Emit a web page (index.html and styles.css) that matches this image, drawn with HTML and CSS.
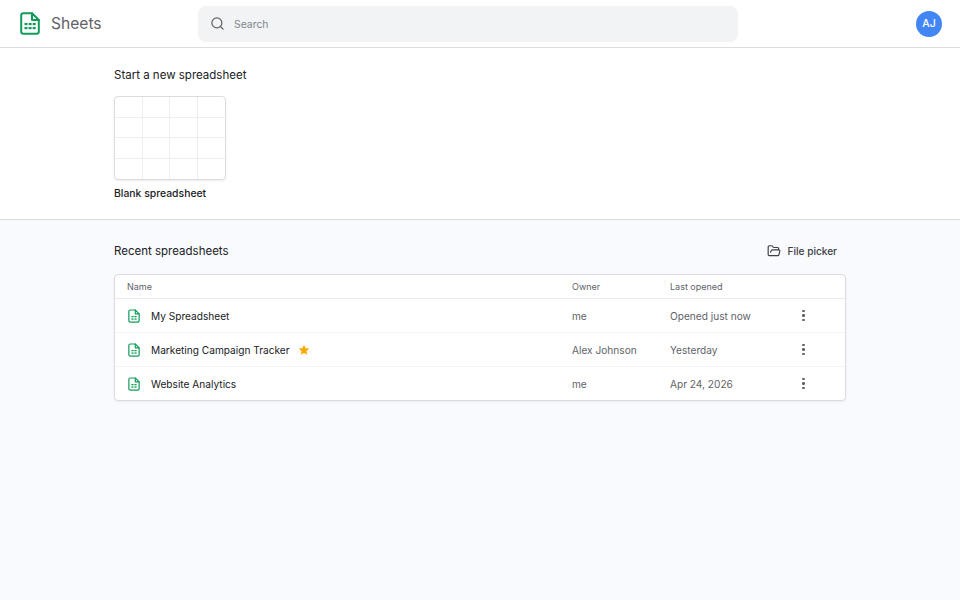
FILE: index.html
```html
<!DOCTYPE html>
<html lang="en">
<head>
    <meta charset="UTF-8">
    <meta name="viewport" content="width=device-width, initial-scale=1.0">
    <title>Sheets</title>
    <link rel="stylesheet" href="styles.css">
</head>
<body>
    <!-- Top bar -->
    <header class="topbar">
        <div class="brand">
            <svg class="brand-icon" viewBox="0 0 20 23" fill="none" stroke="#0f9d58" stroke-width="2" stroke-linejoin="round" stroke-linecap="round">
                <path d="M3.500 1.200h8.500l6.800 6.800v11.500a2.300 2.300 0 0 1-2.300 2.300h-13a2.300 2.300 0 0 1-2.300-2.300v-16a2.300 2.300 0 0 1 2.300-2.300z"/>
                <path d="M12 1.200v6.800h6.800"/>
                <g fill="#0f9d58" stroke="none">
                    <rect x="4.500" y="11" width="3" height="2.200"/>
                    <rect x="8.600" y="11" width="3" height="2.200"/>
                    <rect x="12.700" y="11" width="3" height="2.200"/>
                    <rect x="4.500" y="15" width="3" height="2.200"/>
                    <rect x="8.600" y="15" width="3" height="2.200"/>
                    <rect x="12.700" y="15" width="3" height="2.200"/>
                </g>
            </svg>
            <span class="brand-name">Sheets</span>
        </div>
        <div class="search">
            <svg class="search-icon" viewBox="0 0 24 24" fill="none" stroke="#5f6368" stroke-width="2" stroke-linecap="round">
                <circle cx="11" cy="11" r="8"/>
                <path d="M21 21l-4.300-4.300"/>
            </svg>
            <span class="search-text">Search</span>
        </div>
        <div class="avatar">AJ</div>
    </header>

    <!-- New spreadsheet -->
    <section class="new-section">
        <h2 class="section-title">Start a new spreadsheet</h2>
        <div class="blank-card">
            <div></div><div></div><div></div><div></div>
            <div></div><div></div><div></div><div></div>
            <div></div><div></div><div></div><div></div>
            <div></div><div></div><div></div><div></div>
        </div>
        <div class="blank-label">Blank spreadsheet</div>
    </section>

    <!-- Recent -->
    <main class="recent-section">
        <div class="recent-head">
            <h2 class="section-title">Recent spreadsheets</h2>
            <div class="file-picker">
                <svg class="picker-icon" viewBox="0 0 24 24" fill="none" stroke="#3c4043" stroke-width="2" stroke-linecap="round" stroke-linejoin="round">
                    <path d="M6 14l1.500-2.900A2 2 0 0 1 9.240 10H20a2 2 0 0 1 1.940 2.500l-1.540 6a2 2 0 0 1-1.950 1.500H4a2 2 0 0 1-2-2V5a2 2 0 0 1 2-2h3.900a2 2 0 0 1 1.690.9l.81 1.200a2 2 0 0 0 1.670.9H18a2 2 0 0 1 2 2v2"/>
                </svg>
                File picker
            </div>
        </div>

        <div class="file-table">
            <div class="row row-head">
                <div class="col-name">Name</div>
                <div class="col-owner">Owner</div>
                <div class="col-date">Last opened</div>
            </div>
            <div class="row">
                <div class="col-name">
                    <svg class="file-icon" viewBox="0 0 14 16" fill="none" stroke="#0f9d58" stroke-width="1.400" stroke-linejoin="round" stroke-linecap="round">
                        <path d="M2.600 1h5.900l4.500 4.500v8a1.600 1.600 0 0 1-1.600 1.600H2.600A1.600 1.600 0 0 1 1 13.500v-11A1.600 1.600 0 0 1 2.600 1z"/>
                        <path d="M8.500 1v4.500H13"/>
                        <g fill="#0f9d58" stroke="none">
                            <rect x="4" y="8" width="2.500" height="1.500"/>
                            <rect x="7.500" y="8" width="2.500" height="1.500"/>
                            <rect x="4" y="10.800" width="2.500" height="1.500"/>
                            <rect x="7.500" y="10.800" width="2.500" height="1.500"/>
                        </g>
                    </svg>
                    <span>My Spreadsheet</span>
                </div>
                <div class="col-owner">me</div>
                <div class="col-date">Opened just now</div>
                <div class="col-menu"><i></i><i></i><i></i></div>
            </div>
            <div class="row">
                <div class="col-name">
                    <svg class="file-icon" viewBox="0 0 14 16" fill="none" stroke="#0f9d58" stroke-width="1.400" stroke-linejoin="round" stroke-linecap="round">
                        <path d="M2.600 1h5.900l4.500 4.500v8a1.600 1.600 0 0 1-1.600 1.600H2.600A1.600 1.600 0 0 1 1 13.500v-11A1.600 1.600 0 0 1 2.600 1z"/>
                        <path d="M8.500 1v4.500H13"/>
                        <g fill="#0f9d58" stroke="none">
                            <rect x="4" y="8" width="2.500" height="1.500"/>
                            <rect x="7.500" y="8" width="2.500" height="1.500"/>
                            <rect x="4" y="10.800" width="2.500" height="1.500"/>
                            <rect x="7.500" y="10.800" width="2.500" height="1.500"/>
                        </g>
                    </svg>
                    <span>Marketing Campaign Tracker</span>
                    <svg class="star" viewBox="0 0 24 24" fill="#f9ab00">
                        <path d="M12 1.500l3.200 6.800 7.300.9-5.400 5.100 1.400 7.400-6.500-3.600-6.500 3.600 1.400-7.400-5.400-5.100 7.300-.9z"/>
                    </svg>
                </div>
                <div class="col-owner">Alex Johnson</div>
                <div class="col-date">Yesterday</div>
                <div class="col-menu"><i></i><i></i><i></i></div>
            </div>
            <div class="row">
                <div class="col-name">
                    <svg class="file-icon" viewBox="0 0 14 16" fill="none" stroke="#0f9d58" stroke-width="1.400" stroke-linejoin="round" stroke-linecap="round">
                        <path d="M2.600 1h5.900l4.500 4.500v8a1.600 1.600 0 0 1-1.600 1.600H2.600A1.600 1.600 0 0 1 1 13.500v-11A1.600 1.600 0 0 1 2.600 1z"/>
                        <path d="M8.500 1v4.500H13"/>
                        <g fill="#0f9d58" stroke="none">
                            <rect x="4" y="8" width="2.500" height="1.500"/>
                            <rect x="7.500" y="8" width="2.500" height="1.500"/>
                            <rect x="4" y="10.800" width="2.500" height="1.500"/>
                            <rect x="7.500" y="10.800" width="2.500" height="1.500"/>
                        </g>
                    </svg>
                    <span>Website Analytics</span>
                </div>
                <div class="col-owner">me</div>
                <div class="col-date">Apr 24, 2026</div>
                <div class="col-menu"><i></i><i></i><i></i></div>
            </div>
        </div>
    </main>
</body>
</html>
```

FILE: styles.css
```css
/* General */
html, body {
    height: 100%;
}

body {
    font-family: Inter, "Liberation Sans", Arial, sans-serif;
    margin: 0;
    display: flex;
    flex-direction: column;
    height: 600px;
    overflow: hidden;
    background: #fff;
    color: #202124;
}

h2 {
    margin: 0;
}

.section-title {
    font-size: 11.5px;
    font-weight: 400;
    line-height: 16px;
    color: #202124;
}

/* Top bar */
.topbar {
    height: 48px;
    flex: none;
    display: flex;
    align-items: center;
    padding: 0 18px 0 20px;
    box-sizing: border-box;
    border-bottom: 1px solid #dadce0;
}

.brand {
    width: 178px;
    display: flex;
    align-items: center;
    gap: 11px;
}

.brand-icon {
    width: 20px;
    height: 23px;
}

.brand-name {
    font-size: 15.6px;
    color: #5f6368;
}

.search {
    width: 540px;
    height: 36px;
    display: flex;
    align-items: center;
    gap: 9px;
    padding-left: 12px;
    box-sizing: border-box;
    border-radius: 8px;
    background: #f1f3f4;
}

.search-icon {
    width: 15px;
    height: 15px;
}

.search-text {
    padding-top: 1px;
    font-size: 10.4px;
    color: #80868b;
}

.avatar {
    width: 26px;
    height: 26px;
    margin-left: auto;
    border-radius: 50%;
    background: #4285f4;
    color: #fff;
    font-size: 10.5px;
    font-weight: 500;
    line-height: 26px;
    text-align: center;
}

/* New spreadsheet */
.new-section {
    height: 172px;
    flex: none;
    padding: 19px 114px 0;
    box-sizing: border-box;
    border-bottom: 1px solid #dadce0;
}

.blank-card {
    width: 112px;
    height: 84px;
    margin-top: 13px;
    box-sizing: border-box;
    display: grid;
    grid-template-columns: repeat(4, 1fr);
    grid-template-rows: repeat(4, 1fr);
    border: 1px solid #dadce0;
    border-radius: 4px;
    box-shadow: 0 1px 2px rgba(60, 64, 67, 0.1);
    overflow: hidden;
}

.blank-card div {
    border-right: 1px solid #eceef0;
    border-bottom: 1px solid #eceef0;
}

.blank-card div:nth-child(4n) {
    border-right: none;
}

.blank-card div:nth-child(n+13) {
    border-bottom: none;
}

.blank-label {
    margin-top: 7px;
    font-size: 10.4px;
    font-weight: 500;
    line-height: 14px;
}

/* Recent */
.recent-section {
    flex: 1;
    padding: 0 114px;
    background: #f8fafd;
}

.recent-head {
    height: 54px;
    box-sizing: border-box;
    padding: 8px 9px 0 0;
    display: flex;
    align-items: center;
    justify-content: space-between;
}

.file-picker {
    display: flex;
    align-items: center;
    gap: 6px;
    font-size: 10.1px;
    font-weight: 500;
    color: #3c4043;
}

.picker-icon {
    width: 14px;
    height: 14px;
}

/* File table */
.file-table {
    height: 127px;
    box-sizing: border-box;
    display: flex;
    flex-direction: column;
    background: #fff;
    border: 1px solid #dadce0;
    border-radius: 4px;
    box-shadow: 0 1px 2px rgba(60, 64, 67, 0.08);
}

.row {
    height: 34px;
    flex: none;
    box-sizing: border-box;
    display: flex;
    align-items: center;
    padding-left: 12px;
    font-size: 10.15px;
    border-bottom: 1px solid #f1f3f4;
}

.row:last-child {
    height: 33px;
    border-bottom: none;
}

.row-head {
    height: 24px;
    font-size: 9px;
    border-bottom-color: #e8eaed;
}

.col-name {
    width: 445px;
    display: flex;
    align-items: center;
    color: #202124;
}

.row-head .col-name {
    color: #5f6368;
}

.col-owner {
    width: 98px;
    color: #5f6368;
}

.col-date {
    width: 126px;
    color: #5f6368;
}

.col-menu {
    display: flex;
    flex-direction: column;
    align-items: center;
    gap: 2px;
    width: 15px;
}

.col-menu i {
    width: 2.500px;
    height: 2.500px;
    border-radius: 50%;
    background: #5f6368;
}

.file-icon {
    width: 12px;
    height: 14px;
    margin: 0 11px 0 1px;
    flex: none;
}

.star {
    width: 12px;
    height: 12px;
    margin-left: 8px;
}
```
